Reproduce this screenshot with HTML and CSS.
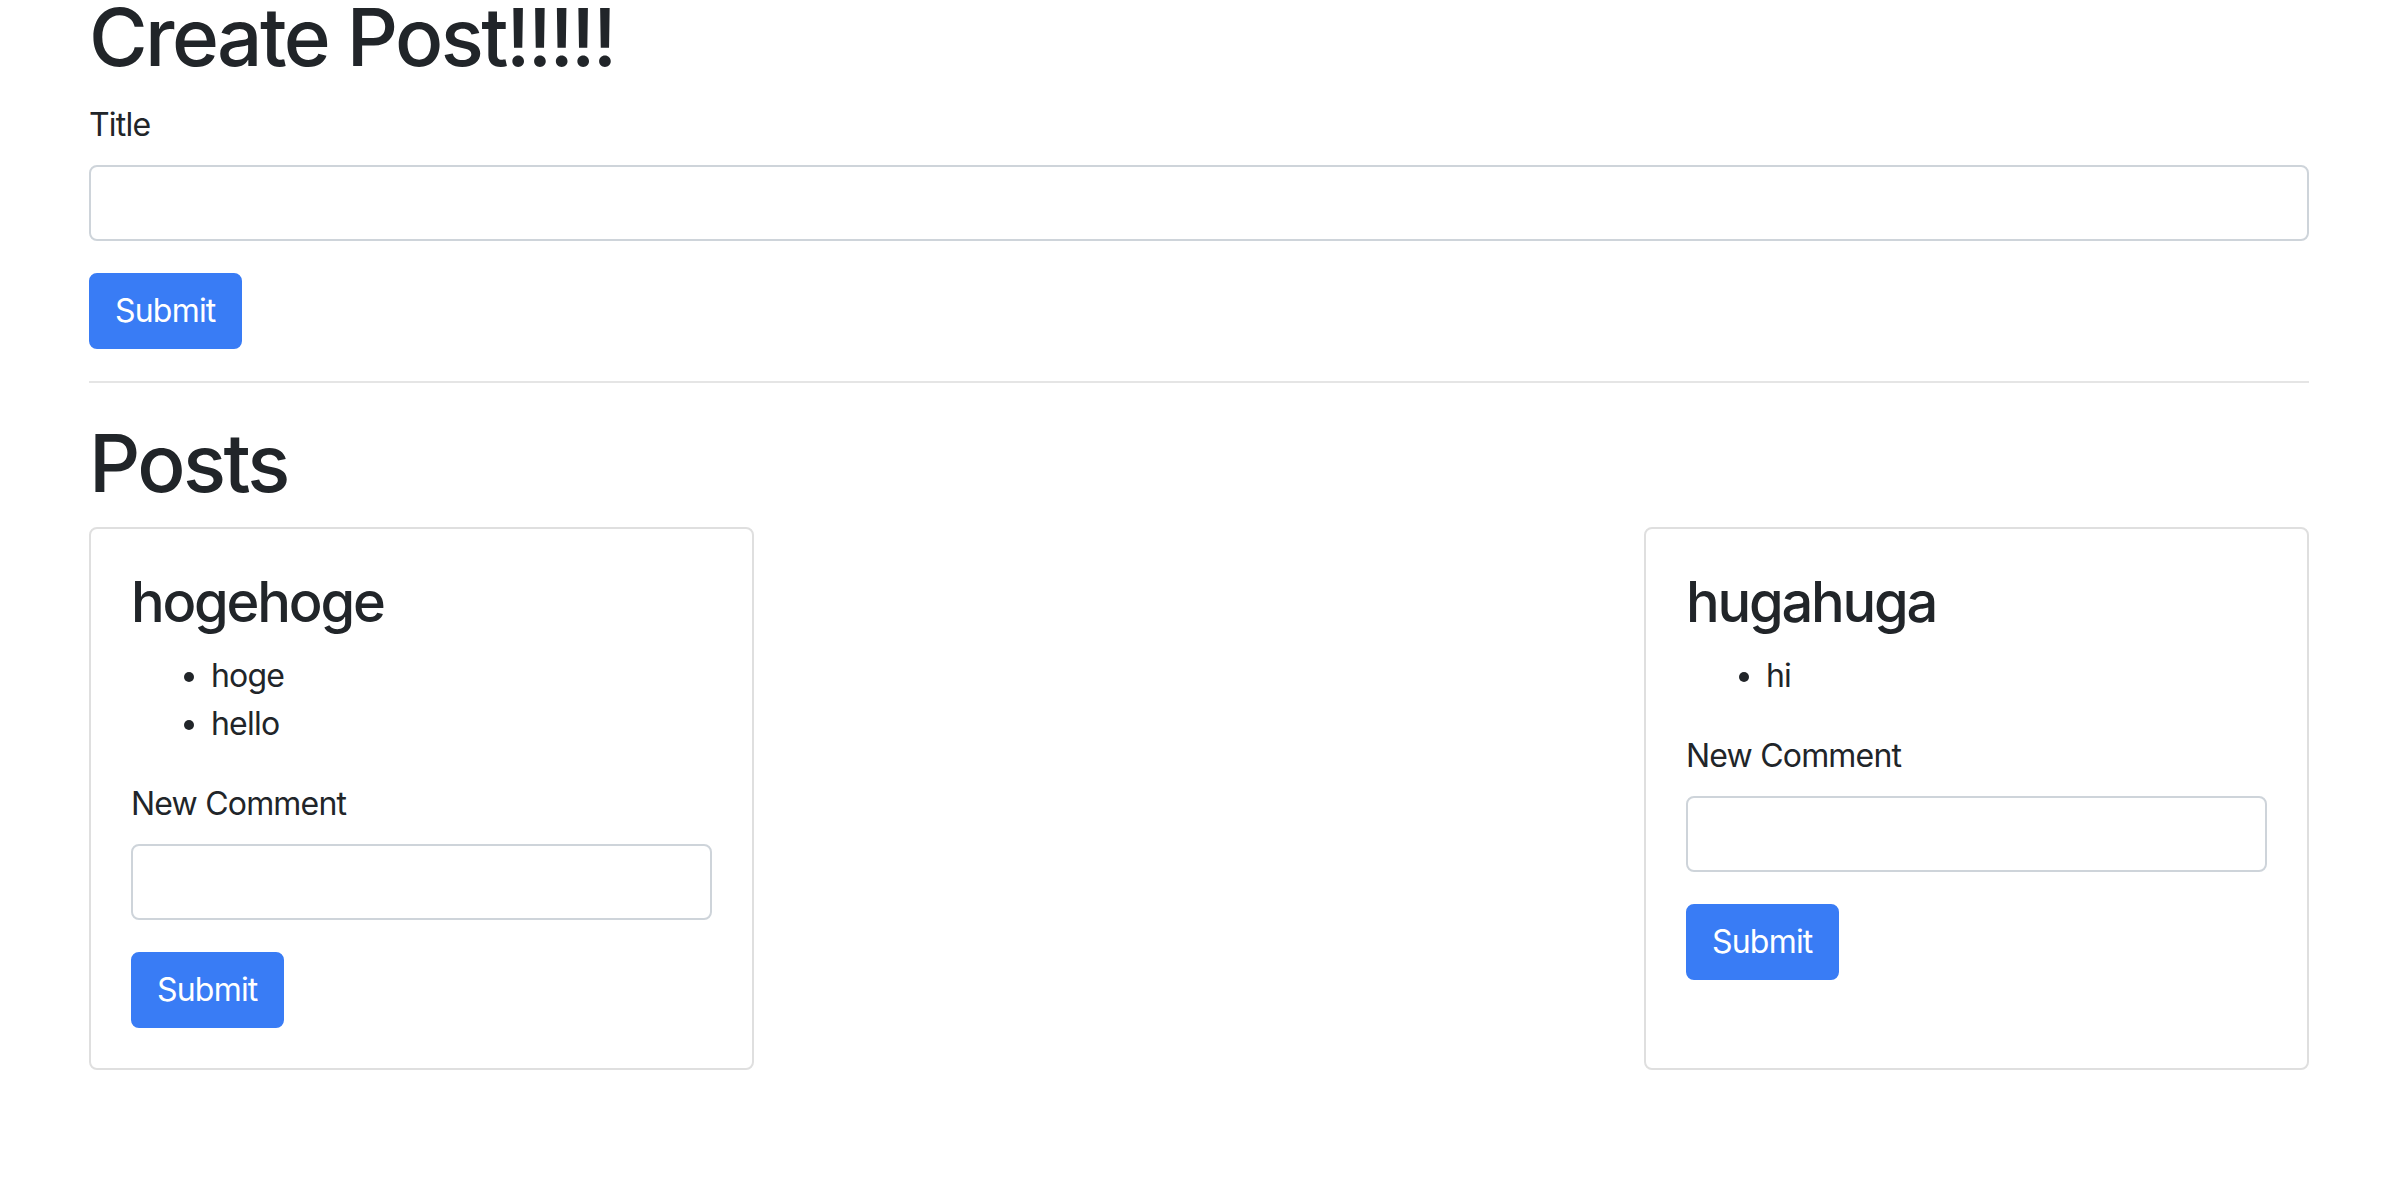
FILE: index.html
```html
<!DOCTYPE html>
<html lang="en">
<head>
<meta charset="utf-8">
<title>Create Post</title>
<link rel="stylesheet" href="styles.css">
</head>
<body>
<div class="container">
  <h1 class="heading heading-top">Create Post!!!!!</h1>
  <form class="form">
    <div class="form-group">
      <label class="label" for="title">Title</label>
      <input class="form-control" id="title" type="text">
    </div>
    <button class="btn" type="button">Submit</button>
  </form>
  <hr class="divider">
  <h1 class="heading">Posts</h1>
  <div class="posts">
    <div class="card">
      <h3 class="card-title">hogehoge</h3>
      <ul class="comments">
        <li>hoge</li>
        <li>hello</li>
      </ul>
      <div class="form-group">
        <label class="label">New Comment</label>
        <input class="form-control" type="text">
      </div>
      <button class="btn" type="button">Submit</button>
    </div>
    <div class="card">
      <h3 class="card-title">hugahuga</h3>
      <ul class="comments">
        <li>hi</li>
      </ul>
      <div class="form-group">
        <label class="label">New Comment</label>
        <input class="form-control" type="text">
      </div>
      <button class="btn" type="button">Submit</button>
    </div>
  </div>
</div>
</body>
</html>
```
FILE: styles.css
```css
* { box-sizing: border-box; }

html, body {
  margin: 0;
  padding: 0;
  background: #fff;
}

body {
  font-family: Inter, "Liberation Sans", sans-serif;
  font-size: 32px;
  line-height: 1.5;
  color: #212529;
  letter-spacing: -0.8px;
}

.container {
  width: 2220px;
  margin: 0 0 0 89px;
}

.heading {
  font-size: 80px;
  font-weight: 500;
  line-height: 1.2;
  margin: 0 0 16px;
  letter-spacing: -2.6px;
}

.heading-top {
  line-height: 74px;
  margin-bottom: 27px;
}

.form { margin: 0; }

.form-group {
  margin-bottom: 32px;
}

.label {
  display: inline-block;
  margin-bottom: 16px;
}

.form-control {
  display: block;
  width: 100%;
  height: 76px;
  padding: 12px 24px;
  font-family: inherit;
  font-size: 32px;
  border: 2px solid #ced4da;
  border-radius: 8px;
  background: #fff;
  color: #495057;
}

.btn {
  display: inline-block;
  height: 76px;
  padding: 0 24px;
  font-family: inherit;
  font-size: 32px;
  letter-spacing: -0.8px;
  line-height: 72px;
  color: #fff;
  background: #397cf5;
  border: 2px solid #397cf5;
  border-radius: 8px;
}

.divider {
  margin: 32px 0;
  border: 0;
  border-top: 2px solid #e5e5e5;
}

.posts {
  display: flex;
  justify-content: space-between;
}

.card {
  width: 665px;
  padding: 40px;
  border: 2px solid #dfdfdf;
  border-radius: 8px;
}

.card-title {
  font-size: 56px;
  font-weight: 500;
  line-height: 1.2;
  margin: 0 0 16px;
  letter-spacing: -2.2px;
}

.comments {
  margin: 0 0 32px;
  padding-left: 80px;
}
```
